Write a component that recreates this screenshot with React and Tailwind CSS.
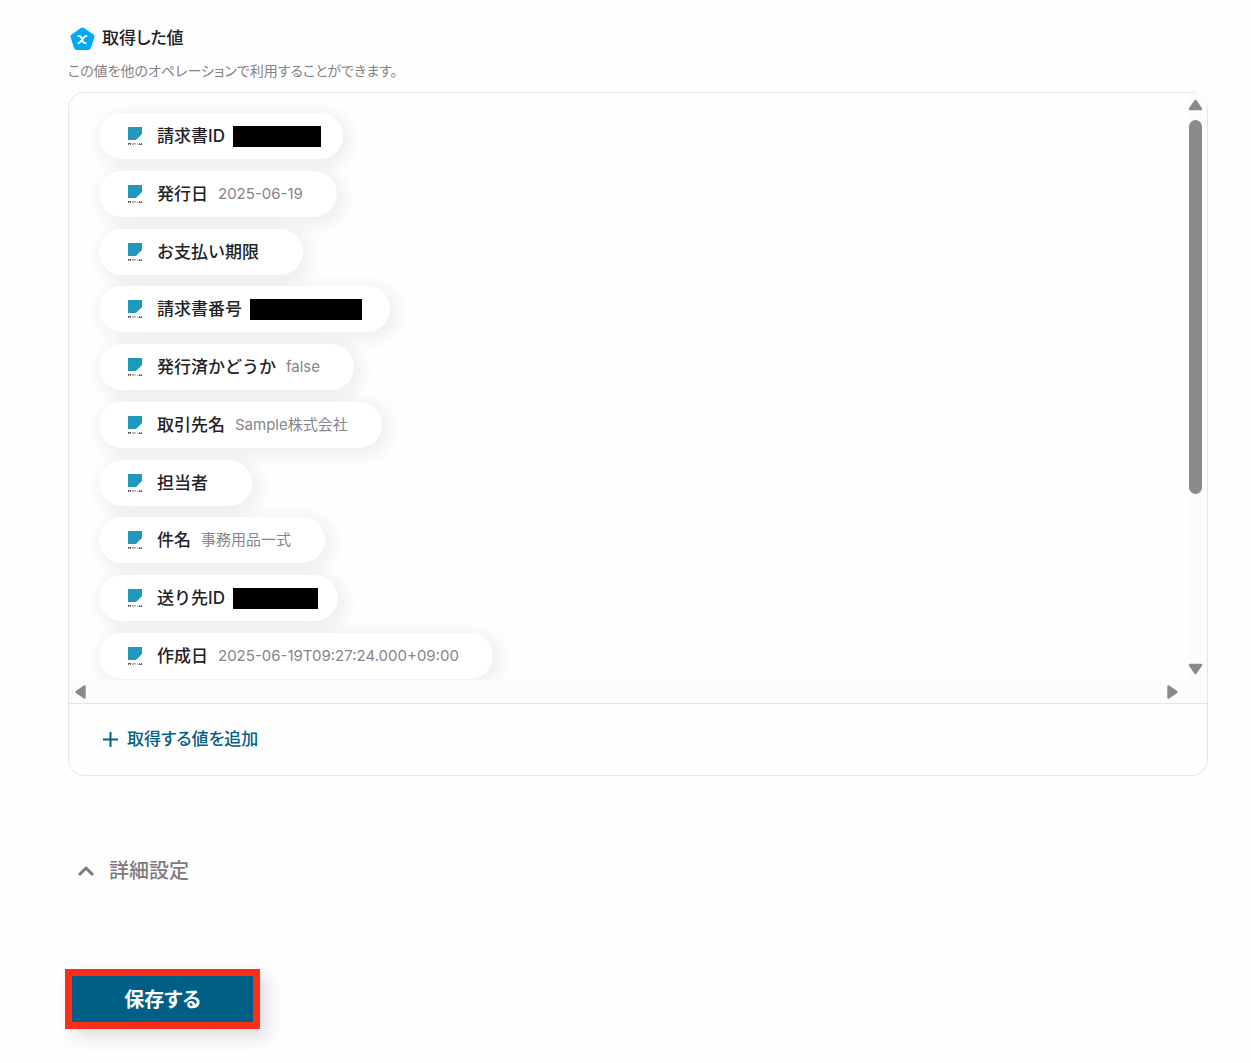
import React from "react";

const items = [
    { name: "請求書ID", mask: "w-[88px]", end: "pr-[22px]" },
    { name: "発行日", value: "2025-06-19" },
    { name: "お支払い期限", value: "" },
    { name: "請求書番号", mask: "w-[112px]", end: "pr-[28px]" },
    { name: "発行済かどうか", value: "false" },
    { name: "取引先名", value: "Sample株式会社" },
    { name: "担当者", value: "" },
    { name: "件名", value: "事務用品一式" },
    { name: "送り先ID", mask: "w-[85px]", end: "pr-[20px]" },
    { name: "作成日", value: "2025-06-19T09:27:24.000+09:00" },
];

function VariableIcon() {
    return (
        <svg className="mt-[2px]" width="25" height="24" viewBox="0 0 25 24" aria-hidden="true">
            <path
                d="M10.900 1.100a2.800 2.800 0 0 1 3.200 0l9.300 6.500a2.500 2.500 0 0 1 .9 2.900l-3.400 10.700a2.600 2.600 0 0 1-2.500 1.800H6.600a2.600 2.600 0 0 1-2.500-1.800L.7 10.500a2.500 2.500 0 0 1 .9-2.900z"
                fill="#03a9f9"
            />
            <path
                d="M8.500 9h.8c1 0 1.500.4 1.900 1.400l1.900 4.300c.4 1 .9 1.400 1.900 1.400h.8M16.400 9c-1 0-1.600.3-2.300 1.200l-3.700 4.700c-.7.8-1.200 1.200-2.200 1.200"
                fill="none"
                stroke="#fff"
                strokeWidth="1.800"
                strokeLinecap="round"
            />
        </svg>
    );
}

function ServiceIcon() {
    return (
        <svg className="shrink-0" width="15" height="20" viewBox="0 0 15 20" aria-hidden="true">
            <path d="M1 1h14v7l-6 6H1z" fill="#2098bb" />
            <path
                d="M1.500 17v2M3.500 17v2M1.500 17.500h2M6 17v2M8 17v1.500M10.500 18.500h1M12.500 17v1.500M14.500 17v2M12.500 18.500h2"
                fill="none"
                stroke="#444"
                strokeWidth="0.800"
            />
        </svg>
    );
}

function Arrow({ className = "" }) {
    return (
        <svg className={className} width="15" height="12" viewBox="0 0 15 12" aria-hidden="true">
            <path
                d="M7.500 2L13 10H2z"
                fill="#8b898c"
                stroke="#8b898c"
                strokeWidth="2.400"
                strokeLinejoin="round"
            />
        </svg>
    );
}

function Item({ item }) {
    return (
        <li
            className={`flex h-[46px] w-max items-center rounded-full bg-white pl-[28px] shadow-[4px_4px_16px_4px_rgba(45,25,65,0.07)] ${item.end || "pr-[34px]"}`}
        >
            <ServiceIcon />
            <span className="ml-[15px] text-[17px] leading-6 font-medium text-[#232225]">{item.name}</span>
            {item.mask ? (
                <span className={`ml-2 h-[21px] bg-black ${item.mask}`} />
            ) : (
                <span className="ml-[10px] text-[15px] leading-6 text-[#878589]">{item.value}</span>
            )}
        </li>
    );
}

export default function App() {
    return (
        <main className="min-h-screen bg-[#fefefe] pt-[25px] pr-[43px] pb-[34px] pl-[68px] font-['Inter','Noto_Sans_CJK_JP',sans-serif] text-[#232225]">
            <section>
                <h2 className="flex items-center gap-[7px] pl-[2px] text-[17px] leading-6 font-medium">
                    <VariableIcon />
                    <span className="[font-feature-settings:'palt']">取得した値</span>
                </h2>
                <p className="mt-[10px] text-[14px] leading-5 text-[#858387] [font-feature-settings:'palt']">
                    この値を他のオペレーションで利用することができます。
                </p>
                <div className="mt-[11px] rounded-2xl border border-[#e6e4e8]">
                    <div className="flex border-b border-[#e6e4e8]">
                        <div className="min-w-0 flex-1">
                            <div className="h-[587px] overflow-hidden rounded-tl-2xl pt-[20px] pl-[30px]">
                                <ul className="flex h-[566px] flex-col justify-between">
                                    {items.map((item) => (
                                        <Item key={item.name} item={item} />
                                    ))}
                                </ul>
                            </div>
                            <div className="flex h-[23px] items-center justify-between bg-[#fcfbfd] pr-2 pl-1">
                                <Arrow className="-rotate-90" />
                                <Arrow className="rotate-90" />
                            </div>
                        </div>
                        <div className="flex w-[19px] flex-col items-center bg-[#fcfbfd] pt-[6px] pr-1 pb-[28px]">
                            <Arrow />
                            <div className="mt-[9px] h-[374px] w-[13px] rounded-full bg-[#8b898c]" />
                            <Arrow className="mt-auto rotate-180" />
                        </div>
                    </div>
                    <div className="px-[33px] pt-[23px] pb-6">
                        <button type="button" className="flex items-center gap-2 text-[17px] leading-6 font-medium text-[#075f83]">
                            <svg width="17" height="17" viewBox="0 0 17 17" aria-hidden="true">
                                <path d="M8.500 1v15M1 8.500h15" stroke="currentColor" strokeWidth="2" />
                            </svg>
                            <span className="[font-feature-settings:'palt']">取得する値を追加</span>
                        </button>
                    </div>
                </div>
            </section>

            <button
                type="button"
                className="mt-[81px] ml-[9px] flex items-center gap-[14px] text-[20px] leading-7 font-medium text-[#7d7b7f]"
            >
                <svg width="18" height="12" viewBox="0 0 18 12" aria-hidden="true">
                    <path d="M2 10l7-7 7 7" fill="none" stroke="currentColor" strokeWidth="3" strokeLinejoin="round" />
                </svg>
                詳細設定
            </button>

            <button
                type="button"
                className="mt-[84px] -ml-[3px] block h-[60px] w-[195px] border-[7px] border-[#ff2d1a] bg-[#005f86] pt-[2px] text-[20px] leading-7 font-bold text-white shadow-[8px_8px_16px_rgba(40,30,60,0.14)] [font-feature-settings:'palt']"
            >
                保存する
            </button>
        </main>
    );
}
